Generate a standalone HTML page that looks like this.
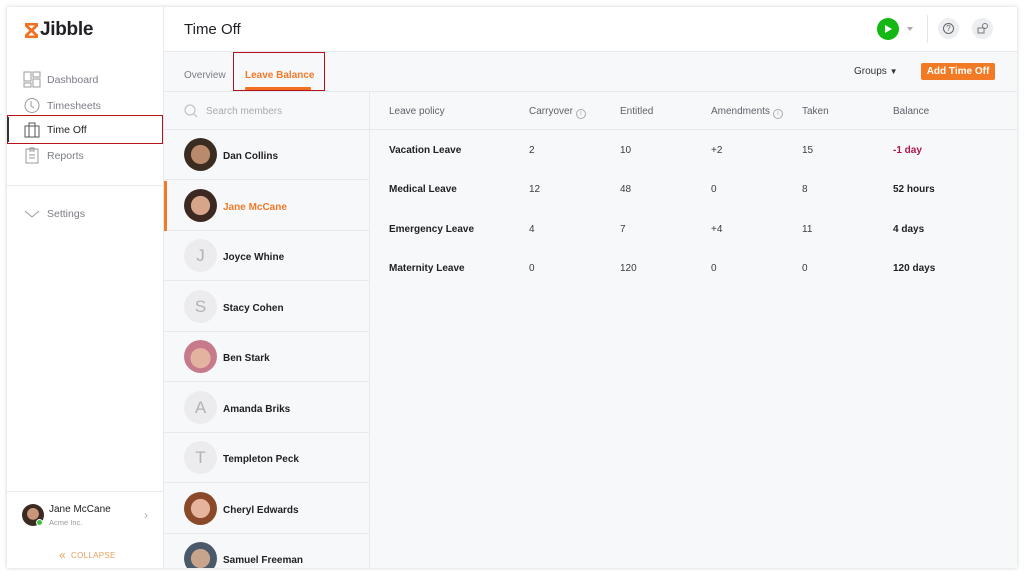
<!DOCTYPE html>
<html><head><meta charset="utf-8"><style>
*{box-sizing:border-box;margin:0;padding:0}
body{width:1024px;height:575px;background:#fff;font-family:"Liberation Sans",sans-serif;position:relative;overflow:hidden;color:#1f1f24}
.frame{position:absolute;left:7px;top:7px;width:1010px;height:561px;background:#f7f8fa;box-shadow:0 0 4px rgba(0,0,0,.18);overflow:hidden}
.side{position:absolute;left:0;top:0;width:157px;height:561px;background:#fff;border-right:1px solid #e8e9ec}
.a{position:absolute}
.nav{position:absolute;left:16px;font-size:10.5px;color:#7a7d85;display:flex;align-items:center;gap:6px}
.hdr{position:absolute;left:157px;top:0;width:853px;height:45px;background:#fff;border-bottom:1px solid #e8e9ec}
.mem{position:absolute;left:157px;width:205px;height:50px;border-bottom:1px solid #e8e9ec;font-size:10px;font-weight:bold;display:flex;align-items:center;padding-top:4px}
.av{width:33px;height:33px;border-radius:50%;margin-left:20px;margin-right:6px;flex:none;margin-top:-4px}
.ini{background:#ececef;color:#b0b2b8;font-weight:normal;font-size:17px;display:flex;align-items:center;justify-content:center}
.th{position:absolute;top:99px;font-size:10px;color:#5e6169}
.td{position:absolute;font-size:10px;color:#3a3c42}
.b{font-weight:bold;color:#1f1f24}
.info{display:inline-block;width:10px;height:10px;border:1px solid #aaa;border-radius:50%;font-size:7px;text-align:center;line-height:8px;color:#aaa;margin-left:3px;vertical-align:-1px}
</style></head><body>
<div class="frame">
 <div class="side">
  <div class="a" style="left:17px;top:12px;display:flex;align-items:center">
   <svg width="15" height="17" viewBox="0 0 15 17"><path d="M1 1h13v3.2L9.6 8.5 14 12.8V16H1v-3.2L5.4 8.5 1 4.2z M4.2 3.5L7.5 6.8 10.8 3.5z M4.2 13.5h6.6L7.5 10.2z" fill="#f36f21" fill-rule="evenodd"/></svg>
   <span style="font-size:19px;font-weight:bold;color:#1f1f24;margin-left:1px;letter-spacing:-.3px">Jibble</span>
  </div>
  <div class="nav" style="top:64px"><svg width="18" height="17"><rect x="1" y="1" width="7" height="9" fill="none" stroke="#999"/><rect x="10" y="1" width="7" height="5" fill="none" stroke="#999"/><rect x="1" y="12" width="7" height="4" fill="none" stroke="#999"/><rect x="10" y="8" width="7" height="8" fill="none" stroke="#999"/></svg>Dashboard</div>
  <div class="nav" style="top:90px"><svg width="18" height="17"><circle cx="9" cy="8.5" r="7" fill="none" stroke="#999"/><path d="M8 4v5l3 2" fill="none" stroke="#999"/></svg>Timesheets</div>
  <div class="a" style="left:0;top:108px;width:156px;height:29px;border:1.5px solid #b5121b"></div>
  <div class="a" style="left:0;top:110px;width:2px;height:25px;background:#333"></div>
  <div class="nav" style="top:115px;color:#1f1f24"><svg width="18" height="16"><rect x="2" y="4" width="14" height="11" fill="none" stroke="#555"/><path d="M6 4V1h6v3M6 4v11M12 4v11" fill="none" stroke="#555"/></svg>Time Off</div>
  <div class="nav" style="top:140px"><svg width="18" height="17"><rect x="3" y="2" width="12" height="14" fill="none" stroke="#999"/><path d="M7 1h4v3H7zM6 8h6M6 11h6" fill="none" stroke="#999"/></svg>Reports</div>
  <div class="a" style="left:0;top:178px;width:156px;border-top:1px solid #e8e9ec"></div>
  <div class="nav" style="top:201px"><svg width="18" height="12"><path d="M2 3l7 6 7-6" fill="none" stroke="#999"/></svg>Settings</div>
  <div class="a" style="left:0;top:484px;width:156px;border-top:1px solid #e8e9ec"></div>
  <div class="a" style="left:15px;top:497px;width:22px;height:22px;border-radius:50%;background:radial-gradient(circle at 50% 45%,#c9967a 35%,#3b2a22 37%)"></div>
  <div class="a" style="left:29px;top:512px;width:7px;height:7px;border-radius:50%;background:#3fbf3f;border:1px solid #fff"></div>
  <div class="a" style="left:42px;top:497px;font-size:10px;color:#1f1f24">Jane McCane</div>
  <div class="a" style="left:42px;top:511px;font-size:7.5px;color:#999">Acme Inc.</div>
  <div class="a" style="left:137px;top:501px;font-size:12px;color:#aaa">›</div>
  <div class="a" style="left:52px;top:541px;font-size:8px;color:#e9a060;letter-spacing:.3px"><span style="font-size:12px;vertical-align:-1px">«</span>&nbsp; COLLAPSE</div>
 </div>
 <div class="hdr">
  <div class="a" style="left:20px;top:14px;font-size:15px">Time Off</div>
  <div class="a" style="left:713px;top:11px;width:22px;height:22px;border-radius:50%;background:#14b814"></div>
  <svg class="a" style="left:720px;top:17px" width="9" height="10"><path d="M1 1l7 4-7 4z" fill="#fff"/></svg>
  <svg class="a" style="left:742px;top:19px" width="8" height="6"><path d="M1 1h6L4 5z" fill="#aaa"/></svg>
  <div class="a" style="left:763px;top:8px;width:1px;height:28px;background:#e4e5e8"></div>
  <div class="a" style="left:774px;top:11px;width:21px;height:21px;border-radius:50%;background:#eceef1;font-size:9px;color:#666;text-align:center;line-height:21px"><span style="border:1px solid #666;border-radius:50%;display:inline-block;width:11px;height:11px;line-height:10px;font-size:8px">?</span></div>
  <div class="a" style="left:808px;top:11px;width:21px;height:21px;border-radius:50%;background:#eceef1"></div>
  <svg class="a" style="left:813px;top:15px" width="12" height="12"><rect x="1" y="6" width="6" height="5" fill="none" stroke="#777"/><circle cx="8" cy="4" r="2.5" fill="none" stroke="#777"/></svg>
 </div>
 <div class="a" style="left:177px;top:63px;font-size:10px;color:#7a7d85">Overview</div>
 <div class="a" style="left:238px;top:63px;font-size:10px;color:#f07a2a;font-weight:bold">Leave Balance</div>
 <div class="a" style="left:238px;top:80px;width:66px;height:3px;background:#f36f21;border-radius:1px"></div>
 <div class="a" style="left:226px;top:45px;width:92px;height:39px;border:1.5px solid #b5121b"></div>
 <div class="a" style="left:847px;top:59px;font-size:10px;color:#333">Groups <span style="font-size:8px">▼</span></div>
 <div class="a" style="left:914px;top:56px;width:74px;height:17px;background:#f37a24;border-radius:2px;color:#fff;font-size:10px;font-weight:bold;text-align:center;line-height:17px">Add Time Off</div>
 <div class="a" style="left:157px;top:84px;width:853px;border-top:1px solid #e8e9ec"></div>
 <div class="a" style="left:362px;top:84px;width:1px;height:477px;background:#e8e9ec"></div>
 <div class="mem" style="top:84px;height:39px;padding-top:2px"><svg style="margin-left:20px;margin-right:8px" width="14" height="14"><circle cx="6" cy="6" r="5" fill="none" stroke="#bbb"/><path d="M10 10l3 3" stroke="#bbb"/></svg><span style="font-weight:normal;color:#aaa">Search members</span></div>
 <div class="a" style="left:362px;top:122px;width:648px;border-top:1px solid #e8e9ec"></div>
 <div class="mem" style="top:123px"><div class="av" style="background:radial-gradient(circle at 50% 50%,#b98a6c 40%,#3a2c20 42%)"></div>Dan Collins</div>
 <div class="mem" style="top:174px;color:#f07a2a"><div class="a" style="left:0;top:0;width:3px;height:50px;background:#f37a24"></div><div class="av" style="background:radial-gradient(circle at 50% 50%,#d7a68a 40%,#3c2a22 42%)"></div>Jane McCane</div>
 <div class="mem" style="top:224px"><div class="av ini">J</div>Joyce Whine</div>
 <div class="mem" style="top:275px"><div class="av ini">S</div>Stacy Cohen</div>
 <div class="mem" style="top:325px"><div class="av" style="background:radial-gradient(circle at 50% 55%,#e4b3a0 40%,#c77a8a 42%)"></div>Ben Stark</div>
 <div class="mem" style="top:376px"><div class="av ini">A</div>Amanda Briks</div>
 <div class="mem" style="top:426px"><div class="av ini">T</div>Templeton Peck</div>
 <div class="mem" style="top:477px"><div class="av" style="background:radial-gradient(circle at 50% 50%,#e6b49c 40%,#8a4a2a 42%)"></div>Cheryl Edwards</div>
 <div class="mem" style="top:527px"><div class="av" style="background:radial-gradient(circle at 50% 50%,#c9a48c 40%,#4a5a6a 42%)"></div>Samuel Freeman</div>
 <div class="th" style="left:382px">Leave policy</div>
 <div class="th" style="left:522px">Carryover<span class="info">i</span></div>
 <div class="th" style="left:613px">Entitled</div>
 <div class="th" style="left:704px">Amendments<span class="info">i</span></div>
 <div class="th" style="left:795px">Taken</div>
 <div class="th" style="left:886px">Balance</div>
 <div class="td b" style="left:382px;top:138px">Vacation Leave</div><div class="td" style="left:522px;top:138px">2</div><div class="td" style="left:613px;top:138px">10</div><div class="td" style="left:704px;top:138px">+2</div><div class="td" style="left:795px;top:138px">15</div><div class="td b" style="left:886px;top:138px;color:#b0144e">-1 day</div>
 <div class="td b" style="left:382px;top:177px">Medical Leave</div><div class="td" style="left:522px;top:177px">12</div><div class="td" style="left:613px;top:177px">48</div><div class="td" style="left:704px;top:177px">0</div><div class="td" style="left:795px;top:177px">8</div><div class="td b" style="left:886px;top:177px">52 hours</div>
 <div class="td b" style="left:382px;top:217px">Emergency Leave</div><div class="td" style="left:522px;top:217px">4</div><div class="td" style="left:613px;top:217px">7</div><div class="td" style="left:704px;top:217px">+4</div><div class="td" style="left:795px;top:217px">11</div><div class="td b" style="left:886px;top:217px">4 days</div>
 <div class="td b" style="left:382px;top:256px">Maternity Leave</div><div class="td" style="left:522px;top:256px">0</div><div class="td" style="left:613px;top:256px">120</div><div class="td" style="left:704px;top:256px">0</div><div class="td" style="left:795px;top:256px">0</div><div class="td b" style="left:886px;top:256px">120 days</div>
</div>
</body></html>
